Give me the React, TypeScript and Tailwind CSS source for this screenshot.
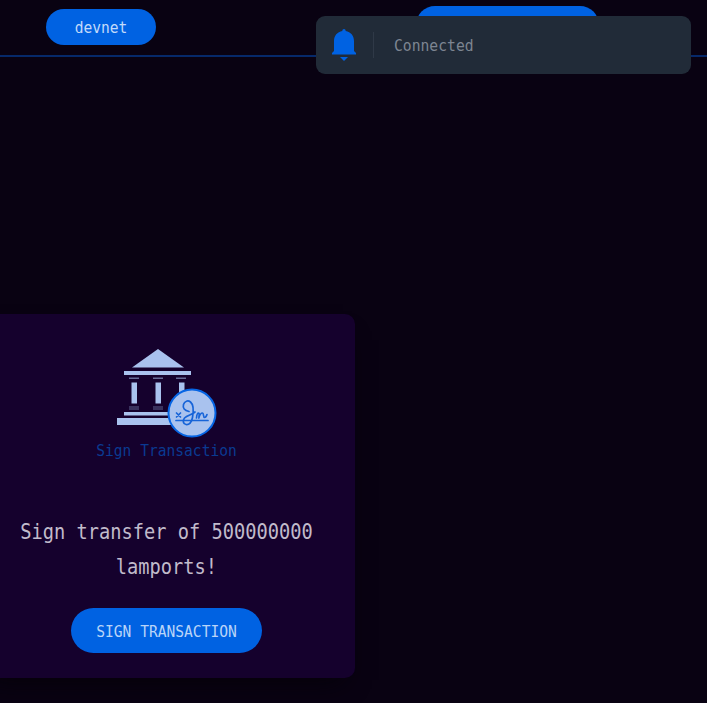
const mono = "font-['DejaVu_Sans_Mono','Liberation_Mono',monospace]";

function BankIcon() {
  return (
    <svg width="102" height="90" viewBox="0 0 102 90" className="block" fill="#a9c2ee">
      <path d="M42 1 68 19.500H16Z" />
      <path d="M8 23H75V27H8Z" />
      <path d="M13 29.500h10v1.500H13zM37 29.500h10v1.500H37zM60 29.500h10v1.500H60z" opacity=".55" />
      <path d="M15.500 34.500h5.500v21h-5.500zM39.500 34.500h5.500v21h-5.500zM63 34.500h5.500v21H63z" />
      <path d="M13 58h10v4H13zM37 58h10v4H37zM60 58h10v4H60z" opacity=".25" />
      <path d="M8 64H75V67.500H8ZM1 70H75V77H1Z" />
      <circle cx="76" cy="65" r="23.500" stroke="#0665e4" strokeWidth="2" />
      <g fill="none" stroke="#1764d8" strokeWidth="1.700" strokeLinecap="round" strokeLinejoin="round">
        <path d="m60.500 65 4 4m0-4-4 4M60 72.500H92" />
        <path d="M73 63.500c-4.500-1-6.500-3.500-5.500-7s4.500-4.500 7-2.500c3.500 3 3 10 2 15.500-.8 5-3.500 7.500-6.500 7s-3.500-4-1.500-6.500c3-3 7-3 10.500-6M80.500 70c.3-3.500.8-5 2-5s.5 3.500.3 5c.8-3 2.200-5 3.700-5s.5 4.500 2 4.500 2-1.500 2.500-3" />
      </g>
    </svg>
  );
}

export default function App() {
  return (
    <div className={`relative h-[703px] w-[707px] overflow-hidden bg-[#090212] ${mono}`}>
      <header className="flex h-[57px] items-start border-b-2 border-[#06296a] pl-[46px]">
        <button className="mt-[9px] flex h-[36px] w-[110px] items-center justify-center rounded-full bg-[#0062e2] text-[14.6px] text-[#c2dafa]">
          <span className="scale-y-110">devnet</span>
        </button>
        <div className="mt-[6px] ml-[260px] h-[38px] w-[183px] rounded-full bg-[#0062e2]" />
      </header>

      <div className="absolute top-[16px] left-[316px] flex h-[58px] w-[375px] items-center rounded-[9px] bg-[#212b38]">
        <svg width="24" height="32" viewBox="0 0 24 32" className="ml-[16px]" fill="#0062e2">
          <path d="M12 0c1 0 1.700.7 1.700 2 5 1 8.300 4.500 8.300 10v10l2 2v1.500H0V24l2-2V12C2 6.500 5.300 3 10.300 2 10.300.7 11 0 12 0ZM8 28h8l-4 4Z" />
        </svg>
        <div className="ml-[17px] h-[26px] w-px bg-[#2f3947]" />
        <span className="ml-[20px] mt-[2px] scale-y-110 text-[14.7px] text-[#7d8591]">Connected</span>
      </div>

      <main className="mt-[257px] ml-[-22px] flex h-[364px] w-[377px] flex-col items-center rounded-[10px] bg-[#15012d] shadow-[0_14px_24px_-12px_#050108]">
        <div className="mt-[34px]">
          <BankIcon />
        </div>
        <div className="mt-[2px] h-[20px] scale-y-110 text-[14.6px] leading-[20px] text-[#0a3a91]">Sign Transaction</div>
        <p className="mt-[55px] text-center text-[18.7px] leading-[34.5px] text-[#c1bbcb]">
          <span className="block scale-y-110 whitespace-nowrap">Sign transfer of 500000000</span>
          <span className="block scale-y-110">lamports!</span>
        </p>
        <button className="mt-[24px] flex h-[45px] w-[191px] items-center justify-center rounded-full bg-[#0062e2] text-[14.6px] text-[#b9d4f8]">
          <span className="scale-y-110">SIGN TRANSACTION</span>
        </button>
      </main>
    </div>
  );
}
